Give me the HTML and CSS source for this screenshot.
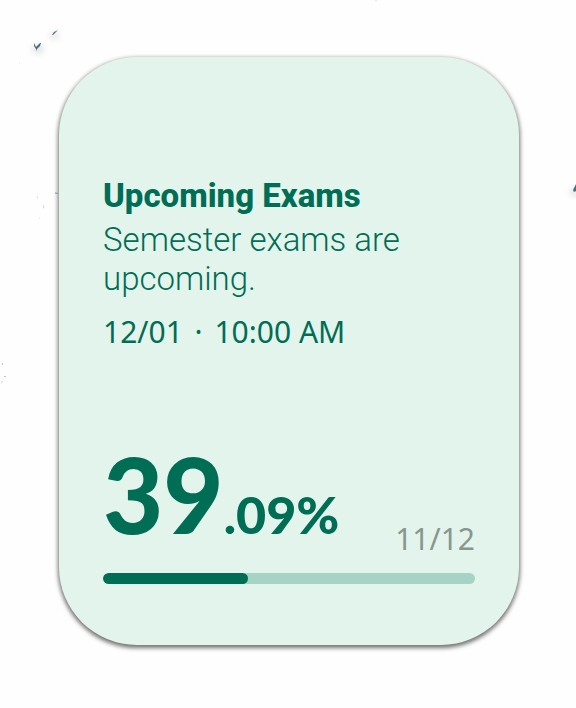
FILE: index.html
```html
<!DOCTYPE html>
<html lang="en">
<head>
<meta charset="utf-8">
<meta name="viewport" content="width=device-width, initial-scale=1">
<title>Upcoming Exams</title>
<link rel="stylesheet" href="styles.css">
</head>
<body>
<svg class="specks" viewBox="0 0 576 708" aria-hidden="true">
  <g class="speck-shadow">
    <ellipse cx="38" cy="49" rx="6" ry="4"/>
    <ellipse cx="54" cy="36" rx="5" ry="3"/>
    <ellipse cx="575" cy="192" rx="5" ry="4"/>
  </g>
  <path class="speck" d="M34 43l1 2 1 2 4-4 1 0-1 3-3 3-1 2v-2l-2-3zM52 35l2-3 4-2-3 3-2 2zM576 184l-3 6 1 2 2-1z"/>
  <path class="speck speck-faint" d="M37 196l1 1v2zM43 205l1 1-1 3zM55 192l3 1v1h-3zM375 0h2l-1 1zM4 376h2v1H4zM2 381h1l-2 3zM2 363h1v2H2zM39 218l1-1-1 2zM19 62l1 2-1-1z"/>
</svg>
<main class="page">
  <article class="card">
    <header class="event">
      <h1 class="title">Upcoming Exams</h1>
      <p class="description">Semester exams are upcoming.</p>
      <p class="date">12/01 <span class="dot">·</span> 10:00 AM</p>
    </header>
    <section class="status">
      <div class="figures">
        <p class="percent">39<span class="decimal">.09%</span></p>
        <p class="count">11/12</p>
      </div>
      <div class="track" role="progressbar" aria-label="Progress" aria-valuemin="0" aria-valuemax="100" aria-valuenow="39.09">
        <div class="fill" style="width: 39.09%"></div>
      </div>
    </section>
  </article>
</main>
</body>
</html>
```
FILE: styles.css
```css
* {
  box-sizing: border-box;
}

body {
  margin: 0;
  background: #fefefe;
  color: #006d55;
  font-family: Roboto, sans-serif;
}

h1,
p {
  margin: 0;
}

.specks {
  position: absolute;
  top: 0;
  left: 0;
  width: 100%;
  pointer-events: none;
}

.speck {
  fill: #47717b;
}

.speck-faint {
  opacity: 0.4;
}

.speck-shadow {
  fill: #000000;
  opacity: 0.12;
  filter: blur(3px);
}

.page {
  display: flex;
  min-height: 100vh;
  padding: 57px 57px 63px 59px;
}

.card {
  position: relative;
  display: flex;
  flex: 1;
  flex-direction: column;
  justify-content: space-between;
  gap: 40px;
  padding: 119px 44px 61px;
  border-radius: 78px;
  background: #e3f4ec;
  box-shadow: 0 2px 4px 1px rgba(0, 0, 0, 0.55);
}

.title {
  font-size: 33px;
  font-weight: 800;
  line-height: 40px;
}

.description {
  margin-top: 4px;
  font-size: 33px;
  font-weight: 300;
  line-height: 39px;
}

.date,
.count {
  font-family: "Noto Sans", sans-serif;
  font-size: 30px;
  line-height: 40px;
}

.date {
  margin-top: 14px;
}

.dot {
  margin: 0 4px;
}

.figures {
  display: flex;
  align-items: flex-end;
  justify-content: space-between;
}

.percent {
  font-family: Lato, sans-serif;
  font-size: 104px;
  font-weight: 900;
  line-height: 90px;
}

.decimal {
  font-size: 52px;
}

.count {
  color: #87978f;
}

.track {
  height: 11px;
  margin-top: 14px;
  overflow: hidden;
  border-radius: 6px;
  background: #a7d2c6;
}

.fill {
  height: 100%;
  border-radius: 6px;
  background: #006d55;
}
```
